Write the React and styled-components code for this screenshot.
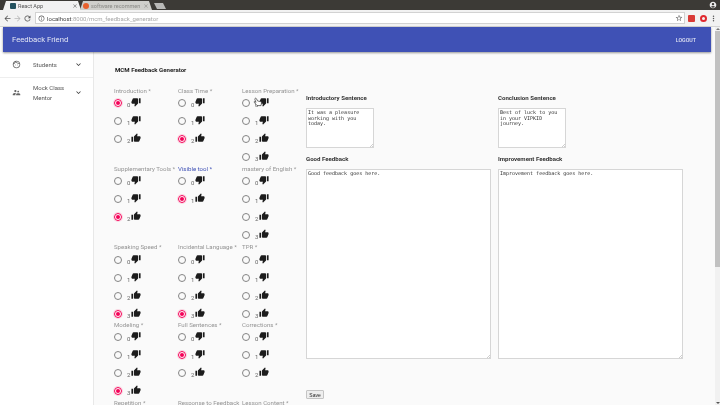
import styled, { createGlobalStyle } from "styled-components";
import {
  MdThumbUp,
  MdThumbDown,
  MdExpandMore,
  MdOutlineFace,
  MdSupervisorAccount,
  MdArrowBack,
  MdArrowForward,
  MdRefresh,
  MdInfoOutline,
  MdStarBorder,
  MdMoreVert,
  MdClose,
  MdAccountCircle,
} from "react-icons/md";

const GlobalStyle = createGlobalStyle`
  html, body {
    margin: 0;
    padding: 0;
    background: #fafafa;
    font-family: Roboto, "Liberation Sans", sans-serif;
  }
  * { box-sizing: border-box; }
`;

const Page = styled.div`
  width: 720px;
  height: 405px;
  overflow: hidden;
  display: flex;
  flex-direction: column;
  position: relative;
  will-change: transform;
`;

const TabStrip = styled.div`
  height: 10px;
  background: #3c3a36;
  display: flex;
  align-items: flex-end;
  padding-left: 3px;
  color: #fff;
`;

const Tab = styled.div`
  width: ${(p) => p.$w}px;
  height: 9px;
  margin-right: -1px;
  padding: 0 3px 0 ${(p) => (p.$active ? 7 : 3)}px;
  display: flex;
  align-items: center;
  gap: 2px;
  font-size: 5.5px;
  white-space: nowrap;
  color: ${(p) => (p.$active ? "#555" : "#8a8a86")};
  background: ${(p) => (p.$active ? "#f2f2f2" : "#cfcfcb")};
  clip-path: polygon(0 100%, 3px 0, calc(100% - 3px) 0, 100% 100%);
`;

const TabTitle = styled.span`
  flex: 1;
  overflow: hidden;
`;

const Favicon = styled.span`
  width: 6px;
  height: 6px;
  flex: none;
  border-radius: ${(p) => (p.$round ? "50%" : "1px")};
  background: ${(p) => p.$color};
`;

const NewTab = styled.div`
  width: 12px;
  height: 6px;
  margin-left: 3px;
  margin-bottom: 1px;
  background: #b9b9b7;
  clip-path: polygon(0 0, 75% 0, 100% 100%, 25% 100%);
`;

const ProfileBadge = styled.div`
  margin-left: auto;
  margin-right: 3px;
  align-self: center;
  display: flex;
  font-size: 8px;
  color: #ededed;
`;

const AddressRow = styled.div`
  height: 17px;
  background: #f2f2f2;
  display: flex;
  align-items: center;
  padding: 0 2px;
  color: #5a5a5a;
  font-size: 9px;
  border-bottom: 1px solid #d4d4d4;
`;

const NavIcon = styled.span`
  display: flex;
  width: 10px;
  flex: none;
  justify-content: center;
  color: ${(p) => (p.$dim ? "#b8b8b8" : "#555")};
`;

const UrlBox = styled.div`
  flex: 1;
  height: 12px;
  margin: 0 2px 0 3px;
  padding: 0 1px 0 2px;
  background: #fff;
  border: 1px solid #d2d2d2;
  display: flex;
  align-items: center;
  gap: 2px;
  font-size: 6px;
  color: #a9a9a9;
`;

const UrlHost = styled.span`
  color: #444;
`;

const StarSlot = styled.span`
  margin-left: auto;
  display: flex;
  color: #666;
  font-size: 8px;
`;

const ExtRed = styled.span`
  width: 7px;
  height: 7px;
  flex: none;
  margin-left: 1px;
  background: #d93a36;
  border-radius: 1px;
`;

const ExtOpera = styled.span`
  width: 7px;
  height: 7px;
  flex: none;
  margin: 0 1px 0 5px;
  border: 2px solid #e0292f;
  border-radius: 50%;
`;

const Viewport = styled.div`
  flex: 1;
  min-height: 0;
  display: flex;
`;

const Site = styled.div`
  flex: 1;
  min-width: 0;
  display: flex;
  flex-direction: column;
`;

const AppBarRow = styled.div`
  padding: 0 4px 0 3px;
  background: #fafafa;
  position: relative;
  z-index: 1;
`;

const AppBar = styled.header`
  height: 25px;
  background: #3f51b5;
  color: #fff;
  display: flex;
  align-items: center;
  justify-content: space-between;
  padding: 0 15px 0 9px;
  box-shadow: 0 1px 2px rgba(0, 0, 0, 0.4);
`;

const Brand = styled.div`
  font-size: 7.7px;
  color: #e4e7f5;
`;

const Logout = styled.div`
  font-size: 5.3px;
  font-weight: 500;
  color: #dfe2f3;
`;

const Body = styled.div`
  flex: 1;
  min-height: 0;
  display: flex;
`;

const Sidebar = styled.nav`
  width: 94px;
  flex: none;
  background: #fff;
  border-right: 1px solid #e8e8e8;
`;

const NavItem = styled.div`
  height: ${(p) => p.$h}px;
  display: grid;
  grid-template-columns: 33px 1fr 19px;
  align-items: center;
  font-size: 6px;
  line-height: 9.5px;
  color: #555;
  border-bottom: ${(p) => (p.$divider ? "1px solid #eee" : "none")};
`;

const NavGlyph = styled.span`
  display: flex;
  justify-content: center;
  font-size: 9px;
  color: #666;
`;

const NavChevron = styled.span`
  display: flex;
  font-size: 9px;
  color: #333;
`;

const Main = styled.main`
  flex: 1;
  min-width: 0;
  padding: 13px 0 0 20px;
`;

const PageTitle = styled.h1`
  margin: 0 0 0 1px;
  font-size: 6.1px;
  line-height: 9px;
  font-weight: 700;
  color: #222;
`;

const Columns = styled.div`
  display: flex;
  margin-top: 14px;
`;

const QuestionGrid = styled.div`
  width: 192px;
  flex: none;
  display: grid;
  grid-template-columns: repeat(3, 64px);
  grid-auto-rows: 78px;
`;

const Question = styled.div`
  display: flex;
  flex-direction: column;
`;

const QuestionLabel = styled.div`
  height: 6px;
  line-height: 6px;
  margin-bottom: ${(p) => (p.$nudge ? 1 : 0)}px;
  font-size: 6.1px;
  white-space: nowrap;
  color: ${(p) => (p.$focused ? "#3f51b5" : "#949494")};
`;

const Option = styled.div`
  height: 18px;
  flex: none;
  display: flex;
  align-items: center;
`;

const RadioCircle = styled.span`
  width: 8px;
  height: 8px;
  flex: none;
  border-radius: 50%;
  border: 1px solid ${(p) => (p.$on ? "#f50057" : "#848484")};
  box-shadow: ${(p) => (p.$on ? "0 0 0 1px rgba(245, 0, 87, 0.14)" : "none")};
  display: flex;
  align-items: center;
  justify-content: center;
  &::after {
    content: "";
    width: 4px;
    height: 4px;
    border-radius: 50%;
    background: ${(p) => (p.$on ? "#f50057" : "transparent")};
  }
`;

const OptionNum = styled.span`
  width: 5px;
  margin-left: 5px;
  padding-top: 3px;
  font-size: 6px;
  color: #666;
`;

const Thumb = styled.span`
  display: flex;
  font-size: 10px;
  color: #1c1c1c;
  margin-top: -3px;
  margin-left: -1px;
`;

const Pointer = styled.svg`
  position: absolute;
  left: 253px;
  top: 97px;
`;

const Forms = styled.div`
  flex: 1;
  display: grid;
  grid-template-columns: 192px 192px;
  align-content: start;
  margin-top: 5px;
`;

const Field = styled.div`
  display: flex;
  flex-direction: column;
`;

const FieldTitle = styled.div`
  height: 9px;
  line-height: 9px;
  margin-top: ${(p) => p.$mt || 0}px;
  font-size: 6.1px;
  font-weight: 700;
  color: #333;
`;

const Area = styled.textarea`
  display: block;
  width: ${(p) => p.$w}px;
  height: ${(p) => p.$h}px;
  margin-top: 6px;
  padding: 1px;
  border: 1px solid #d6d6d6;
  background: #fff;
  font-family: "DejaVu Sans Mono", "Liberation Mono", monospace;
  font-size: 5px;
  line-height: 5.6px;
  color: #333;
  outline: none;
  &::-webkit-resizer {
    background: linear-gradient(135deg, transparent 0 87%, #cfcfcf 87% 91%, transparent 91% 95%, #cfcfcf 95%);
  }
`;

const SaveRow = styled.div`
  grid-column: 1 / 3;
  margin-top: 31px;
`;

const SaveButton = styled.button`
  display: block;
  width: 18px;
  height: 9px;
  padding: 0;
  border: 1px solid #c4c4c4;
  border-radius: 1px;
  background: #eeeeee;
  font-family: "Liberation Sans", sans-serif;
  font-size: 5px;
  color: #222;
`;

const Scrollbar = styled.div`
  width: 5px;
  flex: none;
  background: #f1f1f1;
  display: flex;
  flex-direction: column;
  align-items: center;
  justify-content: space-between;
  padding: 1px 0;
`;

const ScrollArrow = styled.span`
  width: 0;
  height: 0;
  flex: none;
  border-left: 2px solid transparent;
  border-right: 2px solid transparent;
  border-bottom: ${(p) => (p.$up ? "2px solid #777" : "none")};
  border-top: ${(p) => (p.$up ? "none" : "2px solid #555")};
`;

const ScrollTrack = styled.div`
  flex: 1;
  width: 100%;
  padding-top: 1px;
`;

const ScrollThumb = styled.div`
  width: 5px;
  height: 236px;
  background: #c1c1c1;
`;

const questions = [
  { label: "Introduction *", values: [0, 1, 2], picked: 0 },
  { label: "Class Time *", values: [0, 1, 2], picked: 2 },
  { label: "Lesson Preparation *", values: [0, 1, 2, 3] },
  { label: "Supplementary Tools *", values: [0, 1, 2], picked: 2 },
  { label: "Visible tool *", values: [0, 1], picked: 1, focused: true },
  { label: "mastery of English  *", values: [0, 1, 2, 3] },
  { label: "Speaking Speed *", values: [0, 1, 2, 3], picked: 3, nudge: true },
  { label: "Incidental Language *", values: [0, 1, 2, 3], picked: 3, nudge: true },
  { label: "TPR *", values: [0, 1, 2, 3], nudge: true },
  { label: "Modeling *", values: [0, 1, 2, 3], picked: 3 },
  { label: "Full Sentences *", values: [0, 1, 2], picked: 1 },
  { label: "Corrections *", values: [0, 1, 2] },
  { label: "Repetition *", values: [] },
  { label: "Response to Feedback", values: [] },
  { label: "Lesson Content *", values: [] },
];

function isGood(q, v) {
  // two-option questions flip at 1, the rest at 2
  return q.values.length === 2 ? v === 1 : v >= 2;
}

function App() {
  return (
    <Page>
      <GlobalStyle />
      <TabStrip>
        <Tab $active $w={78}>
          <Favicon $color="#24525f" />
          <TabTitle>React App</TabTitle>
          <MdClose size={6} />
        </Tab>
        <Tab $w={72}>
          <Favicon $color="#e8602c" $round />
          <TabTitle>software recommen</TabTitle>
          <MdClose size={6} />
        </Tab>
        <NewTab />
        <ProfileBadge>
          <MdAccountCircle />
        </ProfileBadge>
      </TabStrip>
      <AddressRow>
        <NavIcon><MdArrowBack /></NavIcon>
        <NavIcon $dim><MdArrowForward /></NavIcon>
        <NavIcon><MdRefresh /></NavIcon>
        <UrlBox>
          <MdInfoOutline size={7} color="#555" />
          <span><UrlHost>localhost</UrlHost>:8000/mcm_feedback_generator</span>
          <StarSlot><MdStarBorder /></StarSlot>
        </UrlBox>
        <ExtRed />
        <ExtOpera />
        <NavIcon><MdMoreVert /></NavIcon>
      </AddressRow>
      <Viewport>
        <Site>
          <AppBarRow>
            <AppBar>
              <Brand>Feedback Friend</Brand>
              <Logout>LOGOUT</Logout>
            </AppBar>
          </AppBarRow>
          <Body>
            <Sidebar>
              <NavItem $h={26} $divider>
                <NavGlyph><MdOutlineFace /></NavGlyph>
                <span>Students</span>
                <NavChevron><MdExpandMore /></NavChevron>
              </NavItem>
              <NavItem $h={29}>
                <NavGlyph><MdSupervisorAccount /></NavGlyph>
                <span>Mock Class<br />Mentor</span>
                <NavChevron><MdExpandMore /></NavChevron>
              </NavItem>
            </Sidebar>
            <Main>
              <PageTitle>MCM Feedback Generator</PageTitle>
              <Columns>
                <QuestionGrid>
                  {questions.map((q) => (
                    <Question key={q.label}>
                      <QuestionLabel $focused={q.focused} $nudge={q.nudge}>{q.label}</QuestionLabel>
                      {q.values.map((v) => (
                        <Option key={v}>
                          <RadioCircle $on={q.picked === v} />
                          <OptionNum>{v}</OptionNum>
                          <Thumb>{isGood(q, v) ? <MdThumbUp /> : <MdThumbDown />}</Thumb>
                        </Option>
                      ))}
                    </Question>
                  ))}
                </QuestionGrid>
                <Forms>
                  <Field>
                    <FieldTitle>Introductory Sentence</FieldTitle>
                    <Area $w={68} $h={40} readOnly defaultValue="It was a pleasure working with you today." />
                  </Field>
                  <Field>
                    <FieldTitle>Conclusion Sentence</FieldTitle>
                    <Area $w={68} $h={40} readOnly defaultValue="Best of luck to you in your VIPKID journey." />
                  </Field>
                  <Field>
                    <FieldTitle $mt={6}>Good Feedback</FieldTitle>
                    <Area $w={185} $h={190} readOnly defaultValue="Good feedback goes here." />
                  </Field>
                  <Field>
                    <FieldTitle $mt={6}>Improvement Feedback</FieldTitle>
                    <Area $w={185} $h={190} readOnly defaultValue="Improvement feedback goes here." />
                  </Field>
                  <SaveRow>
                    <SaveButton>Save</SaveButton>
                  </SaveRow>
                </Forms>
              </Columns>
            </Main>
          </Body>
        </Site>
        <Scrollbar>
          <ScrollArrow $up />
          <ScrollTrack>
            <ScrollThumb />
          </ScrollTrack>
          <ScrollArrow />
        </Scrollbar>
      </Viewport>
      <Pointer width="10" height="10" viewBox="0 0 10 10">
        <path d="M2 1.5c.6-.6 1.3-.2 1.6.5L4.6 4l3 .6c.8.2 1 .8.9 1.4L8 8.600H4L1.200 5.200c-.3-.5.300-1 .8-.6L3 5.400 1.900 2.500c-.1-.4-.1-.7.1-1z" fill="#fff" stroke="#333" strokeWidth=".7" />
      </Pointer>
    </Page>
  );
}

export default App;
